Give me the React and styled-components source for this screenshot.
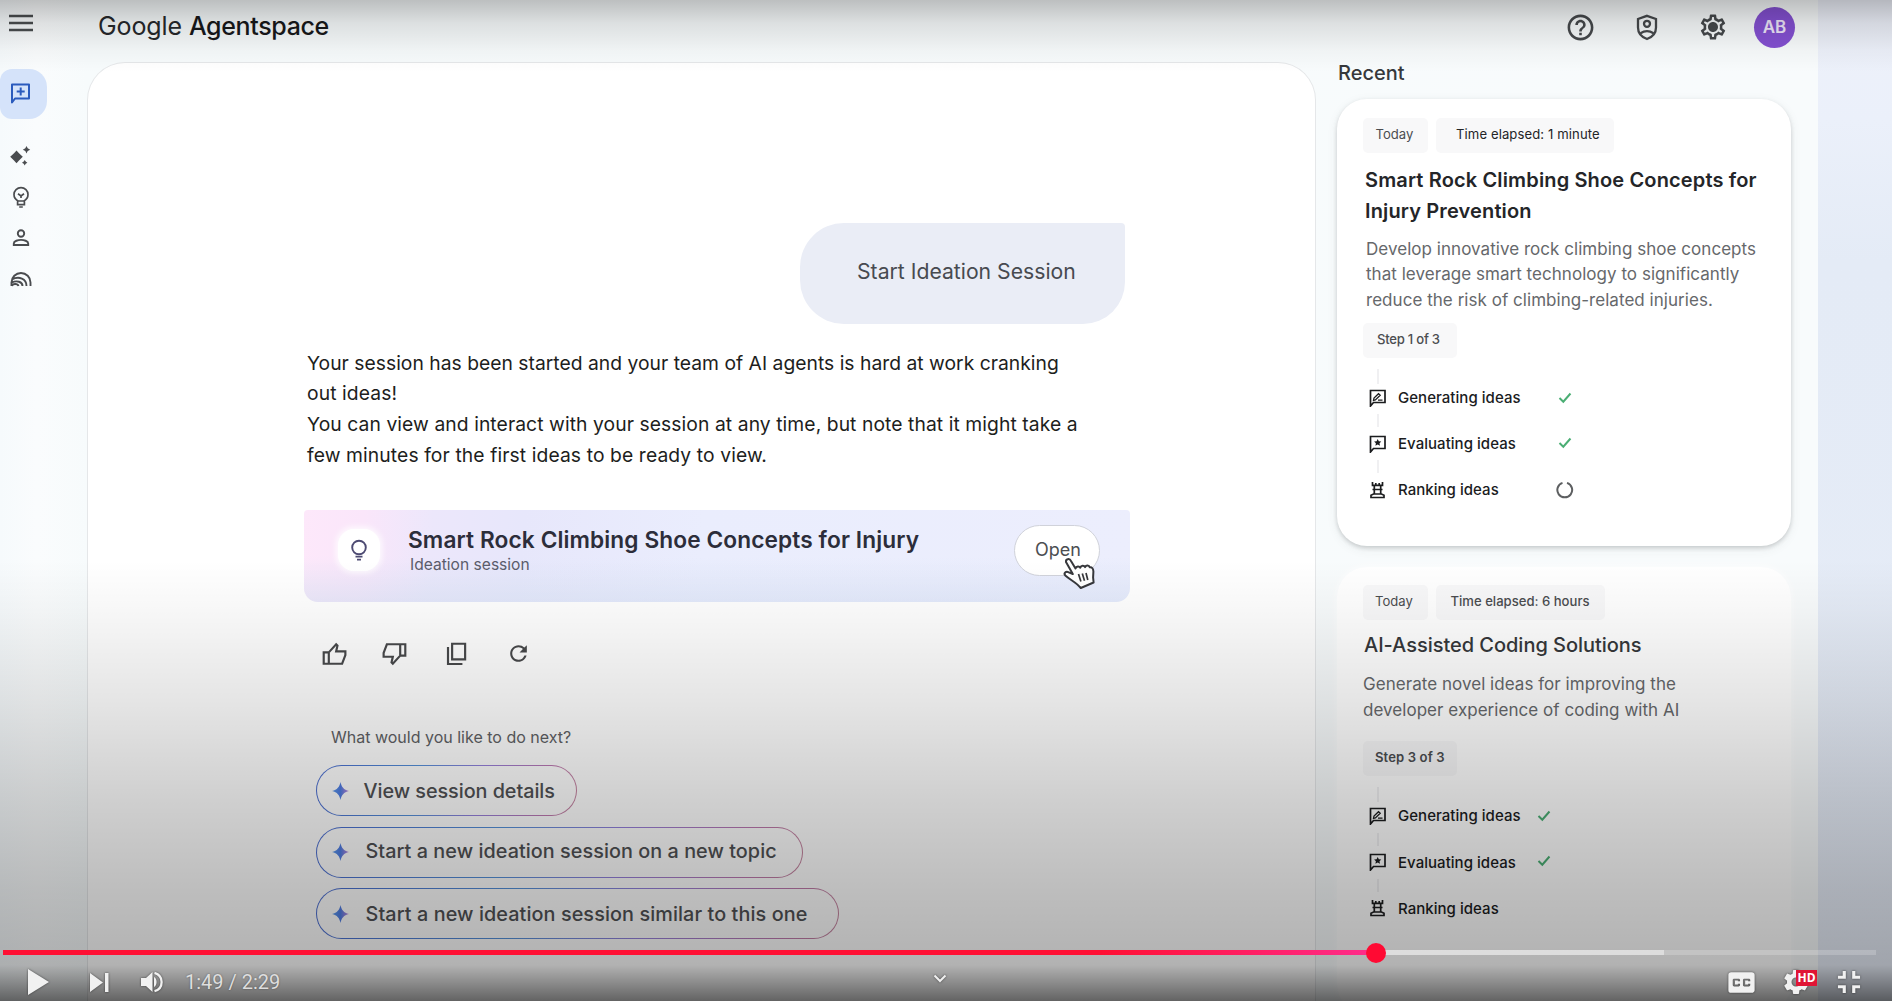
import React from 'react';
import styled, { createGlobalStyle } from 'styled-components';
import {
  MdHelpOutline,
  MdOutlineSettings,
  MdRefresh,
  MdClosedCaption,
  MdSettings,
  MdFullscreenExit,
} from 'react-icons/md';

const GlobalStyle = createGlobalStyle`
  * { box-sizing: border-box; }
  body {
    margin: 0;
    overflow: hidden;
    font-family: Inter, "Liberation Sans", sans-serif;
    color: #1f2023;
    background: #f7fbfc;
  }
  svg { display: block; flex: none; }
`;

/* ---------- frame ---------- */

const Screen = styled.div`
  position: relative;
  display: flex;
  width: 1892px;
  height: 1001px;
  overflow: hidden;
`;

const AppFrame = styled.div`
  display: flex;
  flex-direction: column;
  width: 1818px;
  height: 1001px;
  background: linear-gradient(90deg, #f6fafc 0, #fafcfd 36px, #f7fbfc 87px, #f8fbfc 100%);
`;

const Backdrop = styled.div`
  flex: 1;
  background: linear-gradient(180deg, #eef1fa 0, #ebf0fa 120px, #e4ebf6 260px, #e6ecf7 100%);
`;

const TopShade = styled.div`
  position: absolute;
  inset: 0 0 auto 0;
  height: 72px;
  background: linear-gradient(180deg, rgba(0, 0, 0, 0.24), rgba(0, 0, 0, 0.11) 32%, rgba(0, 0, 0, 0.03) 70%, transparent);
  pointer-events: none;
`;

const BottomShade = styled.div`
  position: absolute;
  inset: auto 0 0 0;
  height: 441px;
  background: linear-gradient(
    180deg,
    transparent 0,
    rgba(0, 0, 0, 0.03) 50px,
    rgba(0, 0, 0, 0.1) 140px,
    rgba(0, 0, 0, 0.19) 240px,
    rgba(0, 0, 0, 0.26) 330px,
    rgba(0, 0, 0, 0.3) 405px,
    rgba(0, 0, 0, 0.61) 441px
  );
  pointer-events: none;
`;

/* ---------- header ---------- */

const Header = styled.header`
  display: flex;
  align-items: center;
  height: 61px;
  padding: 0 23px 7px 9px;
`;

const MenuSlot = styled.div`
  width: 89px;
  padding-bottom: 9px;
`;

const Brand = styled.h1`
  flex: 1;
  margin: 0;
  padding-bottom: 3px;
  font-size: 25px;
  line-height: 32px;
  font-weight: 400;
  letter-spacing: -0.1px;
  color: #26282b;

  b {
    font-weight: 500;
    letter-spacing: -0.35px;
    color: #17181a;
  }
`;

const Tools = styled.div`
  display: flex;
  align-items: center;
  gap: 40px;
  margin-right: 26px;
  color: #46494c;
`;

const Avatar = styled.div`
  display: grid;
  place-items: center;
  width: 41px;
  height: 41px;
  border-radius: 50%;
  background: #8450d2;
  color: #eee6fa;
  font-size: 17px;
  font-weight: 600;
`;

/* ---------- left rail ---------- */

const Body = styled.div`
  display: flex;
  flex: 1;
  min-height: 0;
`;

const Rail = styled.nav`
  display: flex;
  flex-direction: column;
  width: 87px;
  padding-top: 8px;
  color: #4a4c4f;
`;

const RailActive = styled.div`
  display: flex;
  align-items: center;
  width: 47px;
  height: 50px;
  padding: 0 0 0 9px;
  margin-bottom: 16.5px;
  border-radius: 12px 18px 18px 12px;
  background: #d5e3fa;
  color: #2b5bbd;
`;

const RailItem = styled.div`
  display: flex;
  align-items: center;
  height: 41px;
  padding-left: 9px;
`;

/* ---------- conversation ---------- */

const Panel = styled.main`
  display: flex;
  flex-direction: column;
  align-items: flex-start;
  width: 1229px;
  margin-top: 1px;
  padding: 160px 0 0 216px;
  border: 1px solid #e5e7e9;
  border-bottom: 0;
  border-radius: 38px 38px 0 0;
  background: #fff;
`;

const Thread = styled.div`
  display: flex;
  flex-direction: column;
  width: 826px;
`;

const Bubble = styled.div`
  display: flex;
  align-items: center;
  align-self: flex-end;
  width: 325px;
  height: 101px;
  margin-right: 5px;
  padding: 0 0 5px 57px;
  border-radius: 44px 4px 42px 44px;
  background: #eaedf6;
  color: #474a50;
  font-size: 21.2px;
`;

const Reply = styled.p`
  margin: 23.5px 0 0 3px;
  font-size: 19.3px;
  line-height: 30.8px;
  white-space: nowrap;
  color: #1d1e20;
`;

const ReplyLine = styled.span`
  display: block;
  letter-spacing: ${(p) => p.$track}px;
`;

const SessionCard = styled.section`
  display: flex;
  align-items: flex-start;
  width: 826px;
  height: 92px;
  margin-top: 39px;
  padding: 15px 30px 0 34px;
  border-radius: 4px 4px 14px 14px;
  background:
    linear-gradient(180deg, transparent 50%, rgba(222, 231, 250, 0.6)),
    linear-gradient(95deg, #fde8fa 0, #fae6fa 60px, #ece7fb 130px, #e7e7fb 220px, #eaedfd 400px, #eceefd 100%);
`;

const SessionIcon = styled.div`
  display: grid;
  place-items: center;
  width: 42px;
  height: 42px;
  margin: 4px 28px 0 0;
  border-radius: 16px;
  background: #fff;
  box-shadow: 0 0 6px 2px rgba(255, 255, 255, 0.85);
  color: #4d4a72;
`;

const SessionText = styled.div`
  display: flex;
  flex-direction: column;
  flex: 1;
  gap: 2px;
  padding-top: 1px;
`;

const SessionTitle = styled.h2`
  margin: 0;
  font-size: 22.7px;
  line-height: 28px;
  font-weight: 600;
  letter-spacing: 0.1px;
  color: #2c2d3a;
  white-space: nowrap;
`;

const SessionKind = styled.span`
  padding-left: 2px;
  font-size: 15.6px;
  line-height: 18px;
  color: #5b5c6b;
`;

const OpenButton = styled.div`
  position: relative;
  width: 86px;
  height: 51px;
  padding: 11px 0 0 20px;
  border: 1px solid #d0d2da;
  border-radius: 26px;
  background: #fff;
  color: #4c4e52;
  font-size: 18px;
  line-height: 25px;

  svg {
    position: absolute;
    left: 47px;
    top: 31px;
  }
`;

const Feedback = styled.div`
  display: flex;
  align-items: center;
  gap: 35.7px;
  height: 28px;
  margin: 38px 0 0 16.5px;
  color: #48494b;
`;

const Prompt = styled.p`
  margin: 58.500px 0 17px 27px;
  font-size: 16px;
  line-height: 22px;
  color: #606164;
`;

const Suggestions = styled.div`
  display: flex;
  flex-direction: column;
  gap: 10.5px;
  margin-left: 12px;
`;

const Suggestion = styled.div`
  display: flex;
  align-items: center;
  gap: ${(p) => p.$gap}px;
  width: ${(p) => p.$width}px;
  height: 51px;
  padding: 0 0 0 15px;
  border: 1.5px solid transparent;
  border-radius: 26px;
  background:
    linear-gradient(#fff, #fff) padding-box,
    linear-gradient(100deg, #4a6cd0 0, #5592da 38%, #9580dc 62%, #bd78b0 88%, #c4839c) border-box;
  color: #505154;
  font-size: 19.8px;
  font-weight: 500;
  letter-spacing: ${(p) => p.$track}px;
  white-space: nowrap;
`;

const SuggestionText = styled.span`
  padding: ${(p) => (p.$drop > 0 ? p.$drop : 0)}px 0 ${(p) => (p.$drop < 0 ? -p.$drop : 0)}px;
`;

/* ---------- recent column ---------- */

const Recent = styled.aside`
  display: flex;
  flex-direction: column;
  flex: 1;
  padding: 0 27px 0 21px;
`;

const RecentTitle = styled.h2`
  margin: 0 0 13px 1px;
  font-size: 20px;
  line-height: 25px;
  font-weight: 500;
  color: #36383b;
`;

const Card = styled.article`
  flex: none;
  width: 454px;
  height: 447px;
  margin-bottom: 21px;
  padding: ${(p) => (p.$faded ? 18 : 19)}px 0 0 26px;
  border-radius: 30px;
  background: ${(p) => (p.$faded ? 'rgba(255,255,255,0.9)' : '#fff')};
  box-shadow: ${(p) =>
    p.$faded ? '0 0 8px rgba(255,255,255,0.9)' : '0 2px 4px rgba(60,64,67,0.22), 0 3px 12px rgba(60,64,67,0.07)'};
`;

const Chips = styled.div`
  display: flex;
  gap: 8px;
`;

const Chip = styled.span`
  display: inline-flex;
  align-items: center;
  width: ${(p) => p.$width}px;
  height: 35px;
  padding: 0 0 3px ${(p) => p.$pad || 12}px;
  border-radius: 5px;
  background: #f8f8f9;
  color: ${(p) => (p.$dark ? '#232427' : '#4b4d50')};
  font-size: 13.1px;
  font-weight: ${(p) => p.$weight || 400};
  letter-spacing: ${(p) => p.$track || 0}px;
  white-space: nowrap;
`;

const CardTitle = styled.h3`
  margin: ${(p) => p.$top}px 0 0 ${(p) => p.$left}px;
  font-size: 20px;
  line-height: 31px;
  font-weight: ${(p) => p.$weight};
  letter-spacing: ${(p) => p.$track}px;
  color: ${(p) => (p.$weight > 500 ? '#242528' : '#35373a')};
  white-space: nowrap;
`;

const CardText = styled.p`
  margin: ${(p) => p.$top}px 0 ${(p) => p.$bottom}px ${(p) => p.$left}px;
  font-size: 17px;
  line-height: 25.7px;
  letter-spacing: 0.04px;
  color: #66686b;
  white-space: nowrap;
`;

const Steps = styled.div`
  display: flex;
  flex-direction: column;
  padding-left: 6px;
`;

const Connector = styled.div`
  display: flex;
  align-items: ${(p) => (p.$first ? 'flex-end' : 'center')};
  height: ${(p) => (p.$first ? 29.5 : 26.2)}px;
  padding: 0 0 ${(p) => (p.$first ? 4 : 0)}px 8px;

  &::before {
    content: '';
    width: 2px;
    height: ${(p) => (p.$first ? 15 : 13)}px;
    background: #f0f0f2;
  }
`;

const Step = styled.div`
  display: flex;
  align-items: center;
  height: 20px;
  font-size: 15px;
  font-weight: 500;
  letter-spacing: 0.04px;
  color: #1b1c1e;
`;

const StepLabel = styled.span`
  width: ${(p) => p.$width}px;
  padding-left: 12px;
`;

const StepStatus = styled.span`
  display: grid;
  place-items: center;
  width: 24px;
  padding-bottom: ${(p) => p.$lift || 0}px;
  color: #4bae74;
`;

/* ---------- player ---------- */

const Player = styled.div`
  position: absolute;
  inset: auto 0 0 0;
  height: 51px;
  padding: 0 16px 0 3px;
`;

const Track = styled.div`
  display: flex;
  height: 5px;
`;

const Played = styled.div`
  position: relative;
  width: 1373px;
  background: linear-gradient(90deg, #ff0f33 0, #ff0f33 80%, #ff2c8c 100%);

  &::after {
    content: '';
    position: absolute;
    right: -10px;
    top: -7px;
    width: 20px;
    height: 20px;
    border-radius: 50%;
    background: #ff0a33;
  }
`;

const Loaded = styled.div`
  width: 288px;
  background: rgba(255, 255, 255, 0.55);
`;

const Unloaded = styled.div`
  flex: 1;
  background: rgba(255, 255, 255, 0.2);
`;

const Controls = styled.div`
  display: flex;
  align-items: center;
  height: 46px;
  padding: 8px 8px 0 25px;
  color: #f1f1f1;

  svg { filter: drop-shadow(0 0 1px rgba(0, 0, 0, 0.55)); }
`;

const LeftControls = styled.div`
  display: flex;
  align-items: center;
  width: 905px;
`;

const Play = styled.div`width: 62px;`;
const Next = styled.div`width: 51px;`;
const Volume = styled.div`width: 44px;`;

const Clock = styled.span`
  font-family: Roboto, sans-serif;
  font-size: 20px;
  line-height: 24px;
  padding-bottom: 1px;
  color: #dedede;
  text-shadow: 0 0 2px rgba(0, 0, 0, 0.4);
`;

const CollapseSlot = styled.div`
  padding-bottom: 8px;
`;

const RightControls = styled.div`
  display: flex;
  align-items: center;
  flex: 1;
  justify-content: flex-end;
  gap: 22px;
`;

const Captions = styled(MdClosedCaption)`
  width: 35px;
  height: 31px;
`;

const Quality = styled.div`
  position: relative;
  margin-right: -3px;
`;

const HdBadge = styled.span`
  position: absolute;
  left: 15px;
  top: 3px;
  width: 21px;
  height: 16px;
  background: #e01535;
  color: #fff;
  font: 700 12px/16px "Open Sans", sans-serif;
  text-align: center;
`;

/* ---------- icons ---------- */

const Line = ({ w = 24, h = w, box = '0 0 24 24', sw = 2, children }) => (
  <svg width={w} height={h} viewBox={box} fill="none" stroke="currentColor" strokeWidth={sw}>
    {children}
  </svg>
);

const MenuIcon = () => (
  <Line w={24} h={18} box="0 0 24 18" sw={2.4}><path d="M0 2h24M0 9h24M0 16h24" stroke="#4a4d4f" /></Line>
);

const NewChatIcon = () => (
  <Line><path d="M3 20.5V2.500h17v14H6z" strokeLinejoin="round" /><path d="M11.700 5.500v8M7.700 9.500h8" /></Line>
);

const SparklesIcon = () => (
  <svg width="24" height="24" viewBox="0 0 24 24" fill="currentColor">
    <path d="M7.500 6.500l2.500 2.700 3.800 3.600L10 16.500 7.500 19.200 5 16.500l-3.800-3.700L5 9.200zM17.500 2l1.200 2.300 2.500 1.400-2.500 1.400-1.200 2.400-1.200-2.400-2.500-1.400 2.500-1.400zM15.700 16l1 1.600 1.700 1.100-1.700 1.100-1 1.700-1-1.700-1.700-1.100 1.700-1.100z" />
  </svg>
);

const BulbIcon = () => (
  <Line sw={1.7}>
    <path d="M8.600 15.700C6.500 14.500 5 12.300 5 9.600a7 7 0 0 1 14 0c0 2.700-1.500 4.900-3.600 6.100v4H8.600z" />
    <path d="M8.600 16h6.800M10.200 22h3.600M9 8.800l3 2.200 3-2.200M12 11v2" />
  </Line>
);

const PersonIcon = () => (
  <Line sw={1.9}>
    <circle cx="12" cy="7.500" r="3.200" />
    <path d="M4.800 19v-1.600c0-2.400 4.400-3.500 7.200-3.500s7.200 1.100 7.200 3.500V19z" />
  </Line>
);

const ArcsIcon = () => (
  <Line sw={1.9}>
    <path d="M2.500 19v-3.500a9.500 9.500 0 0 1 19 0V19M3 12.300c7-3.300 14.500-.8 14.500 6.700M2.800 15.500c5-2.300 10.700-.8 10.700 3.500M3 19c.5-2.500 5.500-3 6.500 0" />
  </Line>
);

const ShieldIcon = () => (
  <Line w={22} h={27} box="0 0 22 27" sw={2.3}>
    <path d="M11 1.800l9 3.200v8.500c0 5.500-4 9.700-9 11.500-5-1.800-9-6-9-11.500V5z" />
    <circle cx="11" cy="9.800" r="3" />
    <path d="M4.500 19.200c4-2.500 9-2.500 13 0" />
  </Line>
);

const SettingsIcon = () => (
  <svg width="30" height="30" viewBox="0 0 30 30">
    <MdOutlineSettings size={30} />
    <circle cx="15" cy="15" r="3.600" fill="currentColor" />
  </svg>
);

const IdeaIcon = () => (
  <Line sw={1.9}>
    <circle cx="12" cy="9.500" r="6.800" />
    <path d="M8.500 18.600h7M10 21.600h4" />
  </Line>
);

const HandCursor = () => (
  <svg width="34" height="33" viewBox="0 0 34 33" fill="#fff" stroke="#37383c" strokeWidth="2" strokeLinejoin="round">
    <path d="M4 5C3.500 2 7.500.8 9 4l4.500 7.500c.8-2.600 3.800-2.600 4.800-.8.8-2.600 3.900-2.600 4.800-.6 1-2.300 4-2 4.600.2 2.500-.4 3.500 1.500 3.700 4.200l-.3 6 .5 5L18.800 31c-4.500-5.500-10.500-8-15.500-12.500-2-2.500.5-4.500 3.500-3.200l4 1.700z" />
    <path d="M16.500 17l2.400 7.500M20.300 16.500l2.200 7.300M24 16l1.800 7" strokeWidth="1.700" />
  </svg>
);

const ThumbUp = () => (
  <Line w={26}><path d="M2.500 10.500h4.700v10.500H2.500zM7.200 10.500L14 3l1.200 1.200-1.200 5.300h8.500v3.500L19.500 21H7.200" /></Line>
);

const ThumbDown = () => (
  <Line w={26}><path d="M21.500 13.500h-4.700V3h4.700zM16.800 13.500L10 21l-1.200-1.200 1.200-5.300H1.500V11L4.500 3h12.300" /></Line>
);

const CopyIcon = () => (
  <Line w={26}><path d="M7.500 2.500h12V17h-12zM3.700 5.500v15.700H17" /></Line>
);

const Star = ({ id }) => (
  <svg width="17" height="18" viewBox="0 0 17 18">
    <defs>
      <linearGradient id={id} x1="0" x2="1">
        <stop offset="0" stopColor="#5a9aec" />
        <stop offset="0.5" stopColor="#4f7ce2" />
        <stop offset="1" stopColor="#bd86dc" />
      </linearGradient>
    </defs>
    <path d="M8.500 0c1 4.800 3.200 7.800 8.500 9-5.300 1.200-7.500 4.200-8.500 9-1-4.800-3.200-7.800-8.500-9 5.300-1.200 7.500-4.200 8.500-9z" fill={`url(#${id})`} />
  </svg>
);

const FRAME = 'M1.500 17V1.500h14.500v12H4.500z';

const GenerateIcon = () => (
  <Line w={17} h={18} box="0 0 17 18" sw={1.7}>
    <path d={FRAME} />
    <path d="M4.500 11.300L5 9l4.500-4.300 1.700 1.600-4.800 4.600zM9 11.200h4.500" strokeWidth="1.300" />
  </Line>
);

const EvaluateIcon = () => (
  <Line w={17} h={18} box="0 0 17 18" sw={1.7}>
    <path d={FRAME} />
    <path d="M8.700 4l1.100 2.300 2.500.3-1.800 1.700.5 2.500-2.300-1.200-2.300 1.200.5-2.500L5.100 6.600l2.500-.3z" fill="currentColor" stroke="none" />
  </Line>
);

const RankIcon = () => (
  <Line w={17} h={18} box="0 0 17 18" sw={1.7}>
    <path d="M3.500 1v3.300h10V1M6.800 2v2.300M10.200 2v2.300M5.300 4.300v8.700M11.700 4.300v8.700M3.500 8.500h10M2 16.500v-2.300L4.500 13h8l2.500 1.200v2.300z" />
  </Line>
);

const Check = () => (
  <Line w={14} h={12} box="0 0 14 12" sw={2}><path d="M1.500 6l3.800 3.700L12.500 1.500" /></Line>
);

const Spinner = () => (
  <Line w={18} h={18} box="0 0 18 18" sw={2}>
    <path d="M11 1.900a7.400 7.400 0 1 1-4.500 0" stroke="#5d5f61" />
  </Line>
);

const PlayIcon = () => (
  <svg width="21" height="26" viewBox="0 0 21 26" fill="currentColor"><path d="M0 0l21 13L0 26z" /></svg>
);

const NextIcon = () => (
  <svg width="19" height="19" viewBox="0 0 19 19" fill="currentColor"><path d="M0 0l13 9.500L0 19zM15 0h3.500v19H15z" /></svg>
);

const VolumeIcon = () => (
  <svg width="22" height="22" viewBox="0 0 22 22" fill="currentColor">
    <path d="M0 7v8h5l6.500 6V1L5 7zM13 6c3.500 1.500 3.500 8.500 0 10z" />
    <path d="M13.500 1.800c9.500 2.600 9.500 15.800 0 18.400" fill="none" stroke="currentColor" strokeWidth="2.300" />
  </svg>
);

const Chevron = () => (
  <Line w={14} h={9} box="0 0 14 9" sw={2}><path d="M1.500 1.500L7 7l5.500-5.500" /></Line>
);

/* ---------- composition ---------- */

const REPLY = [
  { text: 'Your session has been started and your team of AI agents is hard at work cranking', track: 0.015 },
  { text: 'out ideas!', track: 0.1 },
  { text: 'You can view and interact with your session at any time, but note that it might take a', track: 0.075 },
  { text: 'few minutes for the first ideas to be ready to view.', track: 0.1 },
];

const SUGGESTIONS = [
  { text: 'View session details', width: 261, gap: 14.5, track: -0.04, drop: 1 },
  { text: 'Start a new ideation session on a new topic', width: 487, gap: 16.5, track: 0.06, drop: -2 },
  { text: 'Start a new ideation session similar to this one', width: 523, gap: 16.5, track: 0.1, drop: 1 },
];

const StepList = ({ labelWidth, ranking }) => (
  <Steps>
    <Connector $first />
    <Step>
      <GenerateIcon />
      <StepLabel $width={labelWidth}>Generating ideas</StepLabel>
      <StepStatus><Check /></StepStatus>
    </Step>
    <Connector />
    <Step>
      <EvaluateIcon />
      <StepLabel $width={labelWidth}>Evaluating ideas</StepLabel>
      <StepStatus $lift={2}><Check /></StepStatus>
    </Step>
    <Connector />
    <Step>
      <RankIcon />
      <StepLabel $width={labelWidth}>Ranking ideas</StepLabel>
      <StepStatus>{ranking}</StepStatus>
    </Step>
  </Steps>
);

export default function App() {
  return (
    <Screen>
      <GlobalStyle />
      <AppFrame>
        <Header>
          <MenuSlot><MenuIcon /></MenuSlot>
          <Brand>Google <b>Agentspace</b></Brand>
          <Tools>
            <MdHelpOutline size={31} />
            <ShieldIcon />
            <SettingsIcon />
          </Tools>
          <Avatar>AB</Avatar>
        </Header>
        <Body>
          <Rail>
            <RailActive><NewChatIcon /></RailActive>
            <RailItem><SparklesIcon /></RailItem>
            <RailItem><BulbIcon /></RailItem>
            <RailItem><PersonIcon /></RailItem>
            <RailItem><ArcsIcon /></RailItem>
          </Rail>
          <Panel>
            <Thread>
              <Bubble>Start Ideation Session</Bubble>
              <Reply>
                {REPLY.map((l) => (
                  <ReplyLine key={l.text} $track={l.track}>{l.text}</ReplyLine>
                ))}
              </Reply>
              <SessionCard>
                <SessionIcon><IdeaIcon /></SessionIcon>
                <SessionText>
                  <SessionTitle>Smart Rock Climbing Shoe Concepts for Injury</SessionTitle>
                  <SessionKind>Ideation session</SessionKind>
                </SessionText>
                <OpenButton>Open<HandCursor /></OpenButton>
              </SessionCard>
              <Feedback>
                <ThumbUp />
                <ThumbDown />
                <CopyIcon />
                <MdRefresh size={25} />
              </Feedback>
              <Prompt>What would you like to do next?</Prompt>
              <Suggestions>
                {SUGGESTIONS.map((s, i) => (
                  <Suggestion key={s.text} $width={s.width} $gap={s.gap} $track={s.track}>
                    <Star id={`star-${i}`} />
                    <SuggestionText $drop={s.drop}>{s.text}</SuggestionText>
                  </Suggestion>
                ))}
              </Suggestions>
            </Thread>
          </Panel>
          <Recent>
            <RecentTitle>Recent</RecentTitle>
            <Card>
              <Chips>
                <Chip $width={65} $pad={12.5}>Today</Chip>
                <Chip $width={178} $pad={20} $dark $track={0.1}>Time elapsed: 1 minute</Chip>
              </Chips>
              <CardTitle $top={12} $left={2} $weight={600} $track={0.14}>
                Smart Rock Climbing Shoe Concepts for<br />Injury Prevention
              </CardTitle>
              <CardText $top={9.5} $bottom={9.5} $left={3}>
                Develop innovative rock climbing shoe concepts<br />
                that leverage smart technology to significantly<br />
                reduce the risk of climbing-related injuries.
              </CardText>
              <Chip $width={94} $pad={14} $weight={500} $track={-0.25}>Step 1 of 3</Chip>
              <StepList labelWidth={167} ranking={<Spinner />} />
            </Card>
            <Card $faded>
              <Chips>
                <Chip $width={65}>Today</Chip>
                <Chip $width={169} $pad={14.5} $weight={500}>Time elapsed: 6 hours</Chip>
              </Chips>
              <CardTitle $top={10} $left={1} $weight={500} $track={-0.03}>AI-Assisted Coding Solutions</CardTitle>
              <CardText $top={11} $bottom={18} $left={0}>
                Generate novel ideas for improving the<br />
                developer experience of coding with AI
              </CardText>
              <Chip $width={94} $weight={600} $track={0.1}>Step 3 of 3</Chip>
              <StepList labelWidth={146} />
            </Card>
          </Recent>
        </Body>
      </AppFrame>
      <Backdrop />
      <TopShade />
      <BottomShade />
      <Player>
        <Track>
          <Played />
          <Loaded />
          <Unloaded />
        </Track>
        <Controls>
          <LeftControls>
            <Play><PlayIcon /></Play>
            <Next><NextIcon /></Next>
            <Volume><VolumeIcon /></Volume>
            <Clock>1:49 / 2:29</Clock>
          </LeftControls>
          <CollapseSlot><Chevron /></CollapseSlot>
          <RightControls>
            <Captions preserveAspectRatio="none" />
            <Quality><MdSettings size={30} /><HdBadge>HD</HdBadge></Quality>
            <MdFullscreenExit size={38} />
          </RightControls>
        </Controls>
      </Player>
    </Screen>
  );
}
